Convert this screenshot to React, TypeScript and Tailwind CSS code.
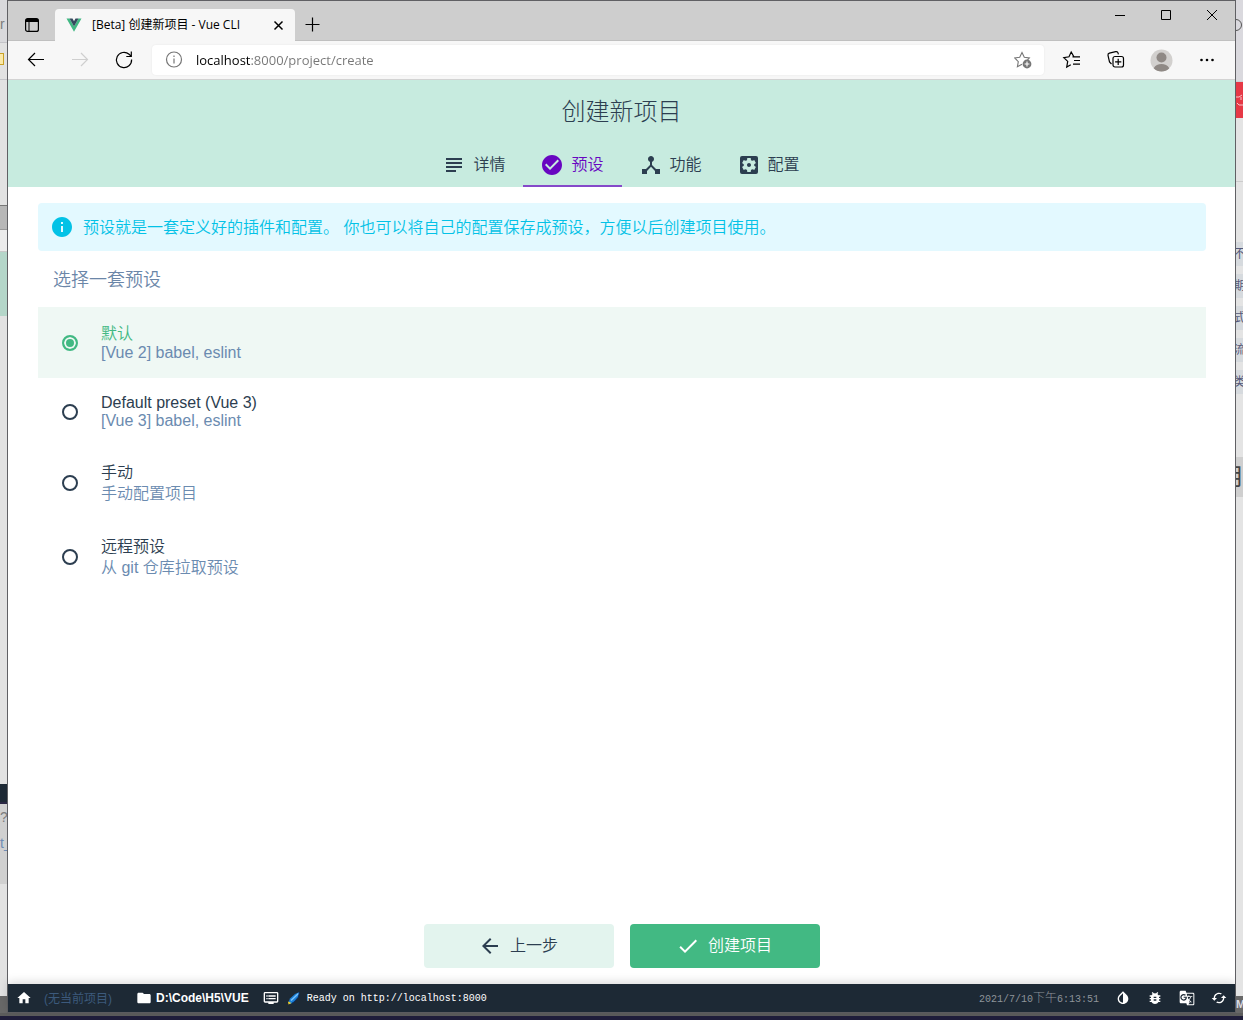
import { useState, type ReactNode } from "react";
import {
  MdArrowBack,
  MdBugReport,
  MdCached,
  MdCheckCircle,
  MdDeviceHub,
  MdDone,
  MdDvr,
  MdFolder,
  MdGTranslate,
  MdHome,
  MdInfo,
  MdInvertColors,
  MdSettingsApplications,
  MdSubject,
} from "react-icons/md";

const tabs = [
  { id: "details", label: "详情", icon: MdSubject },
  { id: "presets", label: "预设", icon: MdCheckCircle },
  { id: "features", label: "功能", icon: MdDeviceHub },
  { id: "config", label: "配置", icon: MdSettingsApplications },
];

const presets = [
  { id: "default", name: "默认", description: "[Vue 2] babel, eslint" },
  { id: "vue3", name: "Default preset (Vue 3)", description: "[Vue 3] babel, eslint" },
  { id: "manual", name: "手动", description: "手动配置项目" },
  { id: "remote", name: "远程预设", description: "从 git 仓库拉取预设" },
];

// Leading differs between Latin-only lines and lines with Chinese characters.
function lineClass(text: string) {
  return /[\u4e00-\u9fff]/.test(text) ? "leading-[21px]" : "leading-[18px]";
}

function VueLogo() {
  return (
    <svg width="16" height="16" viewBox="0 0 16 16" aria-hidden="true">
      <path d="M.500 1.500h3L8 9.500l4.500-8h3L8 14.800z" fill="#41b883" />
      <path d="M3.500 1.500h3L8 4.200l1.500-2.700h3L8 9.500z" fill="#35495e" />
    </svg>
  );
}

function LineIcon({ size = 20, children }: { size?: number; children: ReactNode }) {
  return (
    <svg
      width={size}
      height={size}
      viewBox={`0 0 ${size} ${size}`}
      fill="none"
      stroke="currentColor"
      strokeWidth="1.2"
      aria-hidden="true"
    >
      {children}
    </svg>
  );
}

function TitleBar() {
  return (
    <div className="flex h-10 items-stretch border-b border-[#c0c0c0] bg-[#cecece] text-black">
      <button type="button" aria-label="标签操作" className="flex w-[47px] items-center justify-center pt-2">
        <svg width="14" height="14" viewBox="0 0 14 14" aria-hidden="true">
          <rect x=".6" y=".6" width="12.8" height="12.8" rx="2" fill="none" stroke="currentColor" strokeWidth="1.2" />
          <path d="M1 1h12v3H1z" fill="currentColor" />
          <path d="M4 4v9" stroke="currentColor" />
        </svg>
      </button>
      <div className="-mb-px mt-2 flex w-60 items-center rounded-t bg-[#f7f7f7] px-[11px]">
        <VueLogo />
        <span className="ml-2.5 grow whitespace-nowrap text-xs">[Beta] 创建新项目 - Vue CLI</span>
        <button type="button" aria-label="关闭标签页">
          <svg width="11" height="11" viewBox="0 0 11 11" stroke="currentColor" strokeWidth="1.5" aria-hidden="true">
            <path d="M1.5 1.500l8 8M9.500 1.500l-8 8" />
          </svg>
        </button>
      </div>
      <button type="button" aria-label="新建标签页" className="flex w-[35px] items-center justify-center pt-2">
        <svg width="15" height="15" viewBox="0 0 15 15" stroke="currentColor" strokeWidth="1.2" aria-hidden="true">
          <path d="M7.5 .5v14M.5 7.5h14" />
        </svg>
      </button>
      <div className="ml-auto flex h-7">
        <button type="button" aria-label="最小化" className="flex w-[46px] items-center justify-center">
          <svg width="10" height="10" viewBox="0 0 10 10" stroke="currentColor" aria-hidden="true">
            <path d="M0 5.5h10" />
          </svg>
        </button>
        <button type="button" aria-label="最大化" className="flex w-[46px] items-center justify-center">
          <svg width="10" height="10" viewBox="0 0 10 10" fill="none" stroke="currentColor" aria-hidden="true">
            <path d="M.5 .5h9v9h-9z" />
          </svg>
        </button>
        <button type="button" aria-label="关闭" className="flex w-[46px] items-center justify-center">
          <svg width="10" height="10" viewBox="0 0 10 10" stroke="currentColor" aria-hidden="true">
            <path d="M0 0l10 10M10 0L0 10" />
          </svg>
        </button>
      </div>
    </div>
  );
}

function AddressBar() {
  return (
    <div className="flex h-[39px] items-center border-b border-[#d3d3d3] bg-[#f7f7f7] text-black">
      <button type="button" aria-label="后退" className="ml-[18px]">
        <LineIcon>
          <path d="M18 9.5H2.5M9 3L2.5 9.5 9 16" />
        </LineIcon>
      </button>
      <button type="button" aria-label="前进" disabled className="ml-6 text-[#cfcfcf]">
        <LineIcon>
          <path d="M2 9.5h15.5M11 3l6.5 6.5L11 16" />
        </LineIcon>
      </button>
      <button type="button" aria-label="刷新" className="ml-6">
        <LineIcon>
          <path d="M17.6 9.5a7.6 7.6 0 1 1-2.500-5.200L17 6.200M17.300 1.500v5h-5" />
        </LineIcon>
      </button>
      <div className="ml-[18px] flex h-[30px] grow items-center rounded bg-white px-3 shadow-[0_0_2px_rgba(0,0,0,0.08)]">
        <span className="text-[#767676]">
          <LineIcon>
            <circle cx="10" cy="9.5" r="7.5" />
            <path d="M10 8.5v5M10 5.5v1.5" />
          </LineIcon>
        </span>
        <input
          type="text"
          aria-label="地址"
          defaultValue="localhost:8000/project/create"
          className="ml-3 w-64 grow bg-[linear-gradient(90deg,#000_55px,#767676_55px)] bg-clip-text pt-0.5 font-['Open_Sans','Noto_Sans',sans-serif] text-[13px] text-transparent outline-none"
        />
        <button type="button" aria-label="添加到收藏夹" className="text-[#767676]">
          <svg width="18" height="18" viewBox="0 0 18 18" fill="none" stroke="currentColor" strokeWidth="1.1" aria-hidden="true">
            <path d="M8 13.2l-4.6 2.6.9-5.2L.7 7l5-.7L8 1.500l2.300 4.800 5 .7-1.800 1.800" />
            <circle cx="13" cy="13" r="4.4" fill="currentColor" stroke="none" />
            <path d="M13 10.6v4.8M10.6 13h4.8" stroke="#fff" />
          </svg>
        </button>
      </div>
      <button type="button" aria-label="收藏夹" className="ml-[18px]">
        <LineIcon>
          <path d="M13.500 6.900L11.800 6.600 9.200 2 7 6.800 1.800 7.700l3.900 3.700-1 5.700 4.100-2.300M10.500 6.800h7.500M12 10.500h6M11 14.200h7" />
        </LineIcon>
      </button>
      <button type="button" aria-label="集锦" className="ml-6">
        <LineIcon>
          <path d="M5.500 14L3.500 12 2 5.500a2 2 0 0 1 1.400-2.300l6.300-1.500a2 2 0 0 1 2.400 1.400l.3 1.200" />
          <rect x="7" y="6.5" width="10.5" height="10.5" rx="2" />
          <path d="M12.2 8.700v6.200M9.100 11.800h6.200" />
        </LineIcon>
      </button>
      <button type="button" aria-label="个人资料" className="ml-6">
        <svg width="23" height="23" viewBox="0 0 23 23" aria-hidden="true">
          <circle cx="11.5" cy="11.5" r="11" fill="#d2d0ce" />
          <circle cx="11.5" cy="8.5" r="5" fill="#8f8985" />
          <path d="M3.7 19.200c1.600-3 4.500-4.300 7.800-4.300s6.200 1.300 7.800 4.300a11 11 0 0 1-15.600 0z" fill="#8f8985" />
        </svg>
      </button>
      <button type="button" aria-label="更多" className="ml-6 mr-[18px]">
        <svg width="20" height="20" viewBox="0 0 20 20" fill="currentColor" aria-hidden="true">
          <circle cx="4.500" cy="10" r="1.300" />
          <circle cx="10" cy="10" r="1.300" />
          <circle cx="15.500" cy="10" r="1.300" />
        </svg>
      </button>
    </div>
  );
}

function StatusBar() {
  return (
    <footer className="flex h-7 items-center bg-[#1d2935] text-xs text-white shadow-[0_-2px_10px_rgba(0,0,0,0.15)]">
      <button type="button" aria-label="主页" className="ml-2">
        <MdHome size={16} />
      </button>
      <span className="ml-3 pt-0.5 text-[#3c5a7c]">(无当前项目)</span>
      <button type="button" className="ml-6 flex items-center gap-1 font-bold">
        <MdFolder size={16} />
        D:\Code\H5\VUE
      </button>
      <button type="button" aria-label="日志" className="ml-3.5">
        <MdDvr size={16} />
      </button>
      <svg className="ml-2 mr-1.5" width="14" height="14" viewBox="0 0 14 14" aria-hidden="true">
        <path d="M12.500 1L8 3 3 7.500 1.500 11.500 3.500 13 7 11l4.500-5z" fill="#1b7fd6" />
        <path d="M11.500 2.500L4 9.500" stroke="#7cc4ff" strokeWidth="1.400" />
        <path d="M12.500 1l-1 5L7 11l-2.500 1.500" stroke="#0b2a5c" fill="none" />
        <path d="M1 10.500l3.500 1.500-3 1.500z" fill="#f5d327" />
      </svg>
      <span className="pt-0.5 font-['Liberation_Mono','Noto_Sans_CJK_SC',monospace] text-[10px]">
        Ready on http://localhost:8000
      </span>
      <span className="ml-auto pt-0.5 font-['Liberation_Mono','Noto_Sans_CJK_SC',monospace] text-[10px] text-[#8e949a]">
        2021/7/10<span className="text-xs font-light">下午</span>6:13:51
      </span>
      <div className="ml-4 mr-2 flex gap-4">
        <button type="button" aria-label="切换主题">
          <MdInvertColors size={16} />
        </button>
        <button type="button" aria-label="反馈问题">
          <MdBugReport size={16} />
        </button>
        <button type="button" aria-label="翻译">
          <MdGTranslate size={16} />
        </button>
        <button type="button" aria-label="刷新数据">
          <MdCached size={16} />
        </button>
      </div>
    </footer>
  );
}

function LeftDesktop() {
  return (
    <div className="flex w-[7px] shrink-0 flex-col overflow-hidden bg-[#e2e2e2] text-sm text-[#7d7d7d]">
      <div className="h-[42px] bg-[#d9d9dc] pt-3.5">r</div>
      <div className="h-[38px] border-y border-[#c4c4c8] pt-2.5">
        <div className="h-3 w-1 border border-l-0 border-[#c9a227] bg-[#fbe9a8]" />
      </div>
      <div className="h-[126px] border-b border-[#777]" />
      <div className="h-6 border-b border-[#999] bg-[#b7b7b7]" />
      <div className="h-[22px] border-b border-[#c8c8c8] bg-[#ececec]" />
      <div className="h-16 bg-[#b4d6c9]" />
      <div className="h-[468px]" />
      <div className="h-5 border-b-2 border-[#2a2744] bg-[#1d2935]" />
      <div className="h-20 bg-[#d0d0d0] leading-[26px]">
        <div>?</div>
        <div className="text-[#6f8db5]">t_</div>
      </div>
      <div className="mt-auto h-[17px] bg-[#686868]" />
    </div>
  );
}

function RightDesktop() {
  return (
    <div className="flex w-[7px] shrink-0 flex-col overflow-hidden bg-[#e4e4e4] text-xs text-[#55597a]">
      <div className="h-[82px] border-b border-[#d0d0d4] bg-[#dad9de] pt-[19px]">
        <svg width="7" height="12" viewBox="0 0 7 12" fill="none" stroke="#555" aria-hidden="true">
          <path d="M0 .500a5.500 5.500 0 0 1 0 11" />
        </svg>
      </div>
      <div className="h-9 bg-[#e63946] pt-3">
        <svg width="7" height="12" viewBox="0 0 7 12" fill="none" stroke="#f6c5c9" aria-hidden="true">
          <path d="M0 3h3l3-2M1 9l2 2h4M5 3v3" />
        </svg>
      </div>
      <div className="h-16 border-b border-[#ccc]" />
      <div className="mt-[60px] flex flex-col gap-2">
        {["不", "期", "式", "流", "类"].map((glyph) => (
          <div key={glyph} className="flex h-6 items-center justify-center bg-[#d6dade]">
            {glyph}
          </div>
        ))}
      </div>
      <div className="mt-[63px] flex h-10 items-center justify-end bg-[#cfcfcf] text-2xl text-[#444]">用</div>
      <div className="mt-auto h-[17px] bg-[#686868] text-[11px] font-bold leading-[17px] text-[#d8dce4]">M</div>
    </div>
  );
}

export default function App() {
  const [activeTab, setActiveTab] = useState("presets");
  const [selected, setSelected] = useState("default");

  return (
    <div className="flex min-h-screen flex-col bg-[#5c5c5c] font-['Liberation_Sans','Noto_Sans_CJK_SC',sans-serif] text-[#2c3e50]">
      <div className="flex grow">
        <LeftDesktop />

        <div className="flex min-w-0 grow flex-col border border-[#606064] bg-white">
          <div className="font-['Open_Sans','Noto_Sans_CJK_SC',sans-serif]">
            <TitleBar />
            <AddressBar />
          </div>

          <header className="bg-[#c7ebdf]">
            <h1 className="pt-3.5 text-center text-2xl font-light leading-9">创建新项目</h1>
            <nav className="mt-[13px] flex justify-center">
              {tabs.map(({ id, label, icon: Icon }) => (
                <button
                  key={id}
                  type="button"
                  onClick={() => setActiveTab(id)}
                  className={`flex h-11 items-center gap-[7px] border-b-2 pl-[17px] pr-[18px] pt-0.5 font-[350] ${
                    id === activeTab ? "border-[#8549c9] text-[#6806c1]" : "border-transparent"
                  }`}
                >
                  <Icon size={24} />
                  {label}
                </button>
              ))}
            </nav>
          </header>

          <main className="flex grow flex-col pb-4 pl-[30px] pr-[29px] pt-4">
            <div className="flex h-12 items-center gap-[9px] rounded bg-[#e3f9ff] pl-3 font-[350] text-[#03c2e6]">
              <MdInfo size={24} />
              <p className="pt-0.5">
                预设就是一套定义好的插件和配置。 你也可以将自己的配置保存成预设，方便以后创建项目使用。
              </p>
            </div>

            <fieldset>
              <legend className="flex h-14 w-full items-center pl-[15px] pt-0.5 text-lg font-[350] text-[#6b86a8]">
                选择一套预设
              </legend>
              {presets.map((preset) => {
                const active = preset.id === selected;
                return (
                  <label
                    key={preset.id}
                    className={`flex cursor-pointer items-center py-4 pl-6 font-[350] ${active ? "bg-[#eff8f4]" : ""}`}
                  >
                    <input
                      type="radio"
                      name="preset"
                      checked={active}
                      onChange={() => setSelected(preset.id)}
                      className="mr-[23px] size-4 appearance-none rounded-full border-2 border-[#2c3e50] checked:border-[#42b983] checked:bg-[#42b983] checked:shadow-[inset_0_0_0_2px_#eff8f4]"
                    />
                    <span>
                      <span className={`block ${lineClass(preset.name)} ${active ? "text-[#42b983]" : ""}`}>
                        {preset.name}
                      </span>
                      <span className={`block text-[#6b8bb0] ${lineClass(preset.description)}`}>
                        {preset.description}
                      </span>
                    </span>
                  </label>
                );
              })}
            </fieldset>

            <div className="mt-auto flex justify-center gap-4">
              <button
                type="button"
                className="flex h-11 w-[190px] items-center justify-center gap-2 rounded-sm bg-[#e3f4ee] pr-0.5 font-[350]"
              >
                <MdArrowBack size={24} />
                上一步
              </button>
              <button
                type="button"
                className="flex h-11 w-[190px] items-center justify-center gap-2 rounded-sm bg-[#42b983] pr-0.5 font-[350] text-white"
              >
                <MdDone size={24} />
                创建项目
              </button>
            </div>
          </main>

          <StatusBar />
        </div>

        <RightDesktop />
      </div>
      <div className="h-[7px] border-b-4 border-[#1f1d3a]" />
    </div>
  );
}
